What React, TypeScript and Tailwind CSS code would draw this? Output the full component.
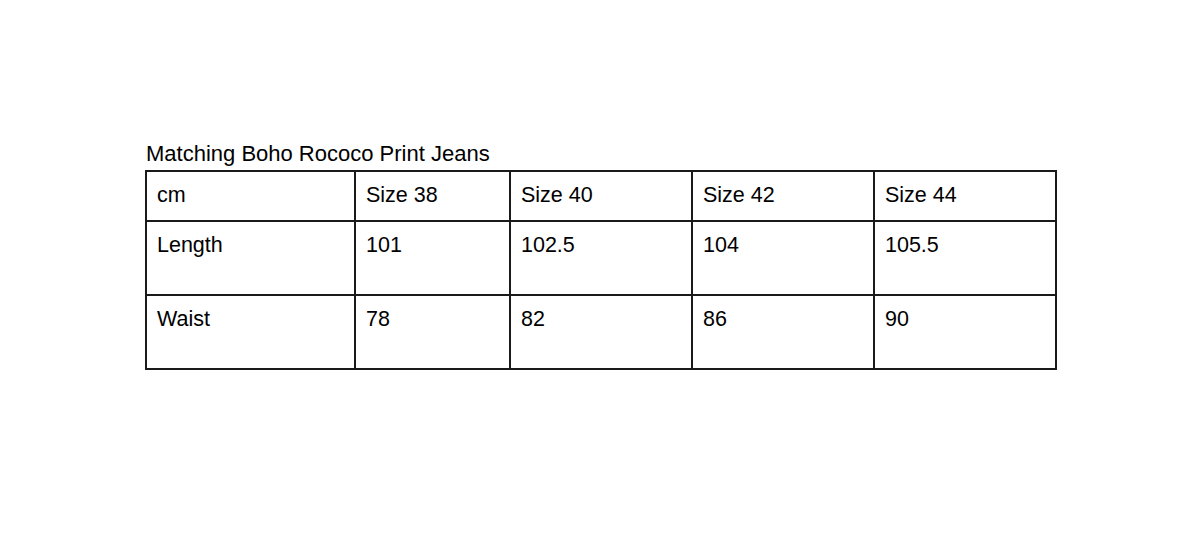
const headers = ["cm", "Size 38", "Size 40", "Size 42", "Size 44"];
const rows = [
  ["Length", "101", "102.5", "104", "105.5"],
  ["Waist", "78", "82", "86", "90"],
];
const widths = ["w-[209px]", "w-[155px]", "w-[182px]", "w-[182px]", "w-[182px]"];

export default function App() {
  return (
    <div className="min-h-[543px] w-[1200px] bg-white pl-[145px] pt-[141px] font-['Liberation_Sans',Arial,sans-serif] text-black">
      <div className="pl-px text-[22px] leading-[26px]">Matching Boho Rococo Print Jeans</div>
      <table className="mt-[3px] w-[910px] table-fixed border-collapse text-[21.5px]">
        <thead>
          <tr className="h-[50px]">
            {headers.map((h, i) => (
              <td key={h} className={`${widths[i]} border-2 border-[#1a1a1a] px-[10px] pt-[10px] align-top leading-[26px]`}>
                {h}
              </td>
            ))}
          </tr>
        </thead>
        <tbody>
          {rows.map((r) => (
            <tr key={r[0]} className="h-[74px]">
              {r.map((c, i) => (
                <td key={i} className={`${widths[i]} border-2 border-[#1a1a1a] px-[10px] pt-[10px] align-top leading-[26px]`}>
                  {c}
                </td>
              ))}
            </tr>
          ))}
        </tbody>
      </table>
    </div>
  );
}
